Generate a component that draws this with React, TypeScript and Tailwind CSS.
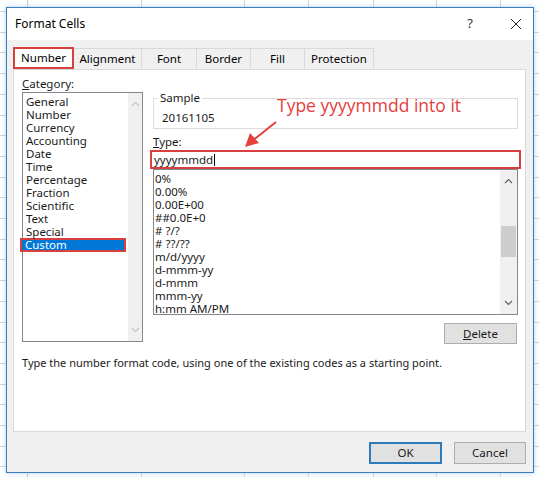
import React from "react"

const categories = [
  "General",
  "Number",
  "Currency",
  "Accounting",
  "Date",
  "Time",
  "Percentage",
  "Fraction",
  "Scientific",
  "Text",
  "Special",
  "Custom",
]

const formats = [
  "0%",
  "0.00%",
  "0.00E+00",
  "##0.0E+0",
  "# ?/?",
  "# ??/??",
  "m/d/yyyy",
  "d-mmm-yy",
  "d-mmm",
  "mmm-yy",
  "h:mm AM/PM",
]

const tabs = [
  { label: "Number", w: "w-[61px]" },
  { label: "Alignment", w: "w-[68px]" },
  { label: "Font", w: "w-[55px]" },
  { label: "Border", w: "w-[54px]" },
  { label: "Fill", w: "w-[54px]" },
  { label: "Protection", w: "w-[69px]" },
]

const Chevron = ({ up, color }: { up?: boolean; color: string }) => (
  <svg width="9" height="6" viewBox="0 0 9 6">
    <path
      d={up ? "M1 5 L4.5 1.5 L8 5" : "M1 1 L4.5 4.5 L8 1"}
      fill="none"
      stroke={color}
      strokeWidth="1.2"
    />
  </svg>
)

export default function App() {
  return (
    <div className="relative w-[539px] h-[477px] overflow-hidden bg-white font-['Segoe_UI','Noto_Sans',sans-serif] text-[11px] text-[#1a1a1a]">
      {/* spreadsheet behind the dialog */}
      <div className="flex h-full bg-[repeating-linear-gradient(to_bottom,transparent_0px,transparent_11px,#d6d6d6_11px,#d6d6d6_12px,transparent_12px,transparent_20.7px)]">
        <div className="w-[28px] border-r border-[#c8c8c8]" />
        <div className="w-[114px] border-r border-[#d6d6d6]" />
        <div className="w-[103px] border-r border-[#d6d6d6]" />
        <div className="w-[64px] border-r border-[#d6d6d6]" />
        <div className="w-[65px] border-r border-[#d6d6d6]" />
        <div className="w-[63px] border-r border-[#d6d6d6]" />
        <div className="w-[64px] border-r border-[#d6d6d6]" />
      </div>

      {/* dialog window */}
      <div className="absolute left-[6px] top-[7px] w-[528px] h-[466px] border border-[#3b7cba] bg-[#f0f0f0] flex flex-col shadow-[0_0_5px_rgba(120,180,230,0.6)]">
        <div className="h-[32px] bg-white flex items-center pl-[8px] shrink-0">
          <span className="text-[12px] text-black">Format Cells</span>
          <span className="ml-auto text-[13px] text-[#333] mr-[37px]">?</span>
          <svg width="12" height="12" viewBox="0 0 12 12" className="mr-[11px]">
            <path d="M1 1 L11 11 M11 1 L1 11" stroke="#222" strokeWidth="1" />
          </svg>
        </div>

        <div className="flex mt-[8px] pl-[6px] h-[22px] relative z-10">
          {tabs.map((t, i) =>
            i === 0 ? (
              <div
                key={t.label}
                className={`${t.w} h-[22px] -mt-[1px] bg-white border-2 border-[#d8403f] flex items-center justify-center text-[11.5px] text-black`}
              >
                {t.label}
              </div>
            ) : (
              <div
                key={t.label}
                className={`${t.w} h-[21px] bg-[#f0f0f0] border-t border-r border-[#d9d9d9] flex items-center justify-center text-[11.5px] text-black`}
              >
                {t.label}
              </div>
            )
          )}
        </div>

        <div className="relative mx-[6px] -mt-[1px] w-[513px] h-[363px] border border-[#d9d9d9] bg-white">
          <div className="flex pl-[8px] pt-[6px]">
            <div className="w-[121px]">
              <div className="h-[16px] leading-[15px] text-[11.5px]">
                <span className="underline">C</span>ategory:
              </div>
              <div className="flex h-[250px] border border-[#82878f]">
                <div className="flex-1 pt-[2px]">
                  {categories.map((c) =>
                    c === "Custom" ? (
                      <div
                        key={c}
                        className="h-[14px] leading-[10px] -ml-[3px] mr-[2px] w-[106px] border-2 border-[#d8403f] bg-[#0078d7] text-white pl-[3px] text-[11.5px] flex items-center"
                      >
                        {c}
                      </div>
                    ) : (
                      <div key={c} className="h-[13px] leading-[13px] pl-[3px] text-[11.5px]">
                        {c}
                      </div>
                    )
                  )}
                </div>
                <div className="w-[15px] bg-[#f0f0f0] flex flex-col items-center justify-between py-[8px]">
                  <Chevron up color="#c4c4c4" />
                  <Chevron color="#c4c4c4" />
                </div>
              </div>
            </div>

            <div className="ml-[10px] w-[366px] flex flex-col">
              <div className="relative mt-[22px] h-[31px] border border-[#dcdcdc] mr-[1px]">
                <span className="absolute -top-[8px] left-[4px] bg-white px-[2px] leading-[14px] text-[11.5px]">
                  Sample
                </span>
                <div className="pt-[12px] pl-[8px] leading-[14px] text-[11.5px]">20161105</div>
              </div>
              <div className="mt-[5px] h-[16px] leading-[15px] text-[11.5px]">
                <span className="underline">T</span>ype:
              </div>
              <div className="-ml-[3px] w-[371px] h-[19px] border-2 border-[#d8403f] flex items-center pl-[2px] text-[11.5px]">
                yyyymmdd
                <span className="ml-[1px] w-[1px] h-[12px] bg-black" />
              </div>
              <div className="flex h-[146px] border border-[#82878f] w-[365px]">
                <div className="flex-1 pt-[2px] pl-[1px]">
                  {formats.map((f) => (
                    <div key={f} className="h-[13px] leading-[13px] text-[11.5px]">
                      {f}
                    </div>
                  ))}
                </div>
                <div className="w-[17px] bg-[#f0f0f0] flex flex-col items-center py-[8px]">
                  <Chevron up color="#606060" />
                  <div className="mt-[42px] w-[15px] h-[31px] bg-[#cdcdcd]" />
                  <div className="mt-auto">
                    <Chevron color="#606060" />
                  </div>
                </div>
              </div>
              <div className="self-end mr-[2px] mt-[8px] w-[73px] h-[21px] bg-[#e1e1e1] border border-[#adadad] flex items-center justify-center text-[11.5px]">
                <span className="underline">D</span>elete
              </div>
            </div>
          </div>
          <div className="pl-[8px] mt-[11px] text-[11px]">
            Type the number format code, using one of the existing codes as a starting point.
          </div>

          {/* annotation overlay */}
          <div className="absolute left-[263px] top-[24px] text-[17.5px] leading-[22px] text-[#e6403e] font-['Open_Sans',sans-serif]">
            Type yyyymmdd into it
          </div>
          <svg className="absolute left-[224px] top-[46px]" width="44" height="36" viewBox="0 0 44 36">
            <path d="M38 6 L14 25" stroke="#e6403e" strokeWidth="2" />
            <path d="M7 31 L12 17 L21 27 Z" fill="#e6403e" />
          </svg>
        </div>

        <div className="flex justify-end gap-[12px] pr-[7px] mt-[10px]">
          <div className="w-[73px] h-[22px] bg-[#e1e1e1] border-2 border-[#2f7ab8] flex items-center justify-center text-[11.5px]">
            OK
          </div>
          <div className="w-[72px] h-[22px] bg-[#e1e1e1] border border-[#adadad] flex items-center justify-center text-[11.5px]">
            Cancel
          </div>
        </div>
      </div>
    </div>
  )
}
